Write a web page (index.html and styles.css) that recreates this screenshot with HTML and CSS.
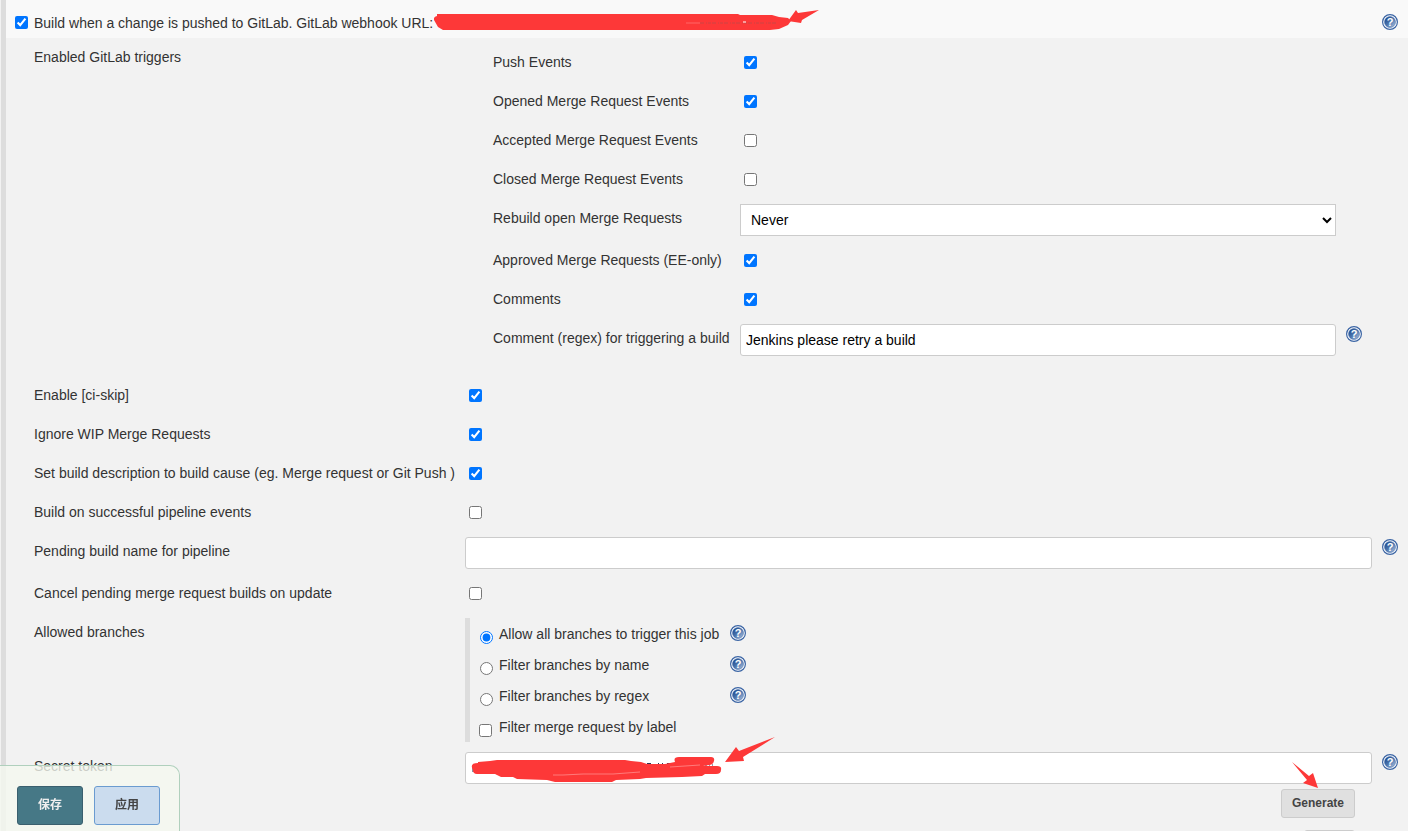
FILE: index.html
```html
<!DOCTYPE html>
<html lang="zh-CN">
<head>
<meta charset="utf-8">
<title>Build Triggers</title>
<link rel="stylesheet" href="styles.css">
</head>
<body>
<svg class="defs" width="0" height="0" aria-hidden="true">
  <defs>
    <linearGradient id="ball" x1="0" y1="0" x2="1" y2="1">
      <stop offset="0.1" stop-color="#1d4a8c"/>
      <stop offset="0.5" stop-color="#4d76ae"/>
      <stop offset="1" stop-color="#b8cae4"/>
    </linearGradient>
    <symbol id="help" viewBox="0 0 16 16">
      <circle cx="8" cy="8" r="7.4" fill="#fff" stroke="#3a64a4" stroke-width="1.2"/>
      <circle cx="8" cy="8" r="5.5" fill="url(#ball)" stroke="#3a64a4" stroke-width="0.5"/>
      <text x="8" y="12" text-anchor="middle" class="help-mark">?</text>
    </symbol>
  </defs>
</svg>
<form class="config">
  <header class="trigger">
    <input type="checkbox" id="gitlab" checked>
    <label for="gitlab">Build when a change is pushed to GitLab. GitLab webhook URL:</label>
    <span class="redacted">
      <svg class="scribble-url" width="390" height="32" viewBox="0 0 390 32" aria-hidden="true">
        <path d="M3 14h301l2 1h32l7 2 9 1 3 3-3 4-9 4-9 1H9l-5-3-4-7q-1-3 3-4z" fill="#fd3838"/>
        <path d="M252 23h14" stroke="#f66" stroke-width="1"/>
        <path d="M266 23h78" stroke="#c44" stroke-width="1" stroke-dasharray="4 2 1 1 3 1"/>
        <path d="M309 22h3" stroke="#fff"/>
        <path d="M354 21l8-11 2 3 21-3-17 10-1 3z" fill="#fd3838"/>
      </svg>
    </span>
    <a class="help" href="#" aria-label="Help"><svg width="16" height="16"><use href="#help"/></svg></a>
  </header>

  <section class="settings">
    <div class="row group" role="group" aria-labelledby="triggers">
      <span class="name" id="triggers">Enabled GitLab triggers</span>
      <div class="events">
        <div class="event"><label for="push">Push Events</label><input type="checkbox" id="push" checked></div>
        <div class="event"><label for="opened">Opened Merge Request Events</label><input type="checkbox" id="opened" checked></div>
        <div class="event"><label for="accepted">Accepted Merge Request Events</label><input type="checkbox" id="accepted"></div>
        <div class="event"><label for="closed">Closed Merge Request Events</label><input type="checkbox" id="closed"></div>
        <div class="event"><label for="rebuild">Rebuild open Merge Requests</label>
          <select id="rebuild" class="field"><option>Never</option></select></div>
        <div class="event"><label for="approved">Approved Merge Requests (EE-only)</label><input type="checkbox" id="approved" checked></div>
        <div class="event"><label for="comments">Comments</label><input type="checkbox" id="comments" checked></div>
        <div class="event"><label for="regex">Comment (regex) for triggering a build</label>
          <input type="text" id="regex" class="field" value="Jenkins please retry a build">
          <a class="help" href="#" aria-label="Help"><svg width="16" height="16"><use href="#help"/></svg></a></div>
      </div>
    </div>

    <div class="row"><label for="ciskip">Enable [ci-skip]</label><input type="checkbox" id="ciskip" checked></div>
    <div class="row"><label for="wip">Ignore WIP Merge Requests</label><input type="checkbox" id="wip" checked></div>
    <div class="row"><label for="cause">Set build description to build cause (eg. Merge request or Git Push )</label><input type="checkbox" id="cause" checked></div>
    <div class="row"><label for="pipeline">Build on successful pipeline events</label><input type="checkbox" id="pipeline"></div>
    <div class="row"><label for="pending">Pending build name for pipeline</label>
      <input type="text" id="pending" class="field">
      <a class="help" href="#" aria-label="Help"><svg width="16" height="16"><use href="#help"/></svg></a></div>
    <div class="row"><label for="cancel">Cancel pending merge request builds on update</label><input type="checkbox" id="cancel"></div>

    <div class="row" role="group" aria-labelledby="allowed"><span class="name" id="allowed">Allowed branches</span>
      <div class="branches">
        <div class="branch"><input type="radio" name="branch" id="all" checked><label for="all">Allow all branches to trigger this job</label>
          <a class="help" href="#" aria-label="Help"><svg width="16" height="16"><use href="#help"/></svg></a></div>
        <div class="branch"><input type="radio" name="branch" id="byname"><label for="byname">Filter branches by name</label>
          <a class="help" href="#" aria-label="Help"><svg width="16" height="16"><use href="#help"/></svg></a></div>
        <div class="branch"><input type="radio" name="branch" id="byregex"><label for="byregex">Filter branches by regex</label>
          <a class="help" href="#" aria-label="Help"><svg width="16" height="16"><use href="#help"/></svg></a></div>
        <div class="branch"><input type="checkbox" id="bylabel"><label for="bylabel">Filter merge request by label</label></div>
      </div>
    </div>

    <div class="row"><label for="token">Secret token</label>
      <div class="token">
        <input type="text" id="token" class="field">
        <svg class="scribble-token" width="310" height="50" viewBox="0 0 310 50" aria-hidden="true">
          <path d="M182 27.500h4m7 0h1m3 0h1m4 0h3m35 1.500h2m2 0h1m2 0h1" stroke="#335" stroke-width="1"/>
          <path d="M8 36v-4" stroke="#224" stroke-width="1"/>
          <path d="M13 26l12-1 7-1h128l6 1 10 1 6 2h18l10-2q-2-5 4-5h32q4 0 3 4-1 4-5 4l-6 1h14q5 0 4 4 0 4-5 4h-11l-3 2-20 1-36 1-6 1-24 1-4 2H90l-8-2-30-1-4-2H36l-6-3H12q-4 0-4-4-4-7 5-7z" fill="#fd3838"/>
          <path d="M88 39h10l20-1h30l27-2M205 31l30-2" fill="none" stroke="#ff8c8c" stroke-width="0.800"/>
          <path d="M260 26l11-15 3 4 36-14-32 20 1 4z" fill="#fd3838"/>
        </svg>
      </div>
      <a class="help" href="#" aria-label="Help"><svg width="16" height="16"><use href="#help"/></svg></a></div>

    <div class="actions">
      <button type="button" class="plain">Generate</button>
      <svg class="pointer" width="28" height="28" viewBox="0 0 28 28" aria-hidden="true"><path d="M1 1l17 14 4-3 5 15-15-5 4-3z" fill="#fd3838"/></svg>
      <button type="button" class="plain" aria-label="Clear"></button>
    </div>
  </section>

  <footer class="savebar">
    <button type="submit" class="save">保存</button>
    <button type="button" class="apply">应用</button>
  </footer>
</form>
</body>
</html>
```
FILE: styles.css
```css
* { box-sizing: border-box; }
body {
  margin: 0;
  height: 100vh;
  overflow: hidden;
  background: #f2f2f2;
  color: #333;
  font: 14px/28px "Liberation Sans", Arial, "Noto Sans CJK SC", sans-serif;
}
.defs { position: absolute; }
.help-mark { font: bold 11px "Liberation Sans", sans-serif; fill: #fff; }
input, select, button { font: inherit; }
input[type=checkbox], input[type=radio] { width: 13px; height: 13px; }

.config {
  margin-left: 1px;
  border-left: 5px solid #ddd;
}
.trigger {
  display: flex;
  align-items: center;
  gap: 6px;
  height: 38px;
  padding: 6px 10px 0 9px;
  background: #f9f9f9;
}
.trigger input { margin: 0; }
.trigger label { padding-top: 2px; }
.trigger .help { margin: 0 0 0 auto; }
.redacted { position: relative; align-self: stretch; }
.scribble-url { position: absolute; top: -6px; left: -5px; }

.settings { padding: 5px 10px 0 28px; }
.row, .event {
  display: grid;
  align-items: start;
  margin-bottom: 10px;
}
.row { grid-template-columns: 431px 1fr 26px; min-height: 29px; }
.group { margin-bottom: 15px; }
.events { padding: 5px 10px 0 28px; }
.event { grid-template-columns: 247px 1fr 26px; min-height: 29px; }
.row label, .row .name { white-space: nowrap; }
.row input[type=checkbox] { margin: 8px 4px; }
.event:last-child { margin-bottom: 0; padding-bottom: 10px; }

.field {
  width: 100%;
  height: 32px;
  padding: 0 5px;
  border: 1px solid #ccc;
  border-radius: 3px;
  background: #fff;
  color: #000;
}
select.field { padding: 0 6px; border-radius: 0; }

.help { display: block; height: 16px; margin: 2px 0 0 10px; }
.help svg { display: block; }

.branches {
  padding-left: 10px;
  border-left: 5px solid #ddd;
}
.branch {
  display: grid;
  grid-template-columns: 19px 221px 26px;
  align-items: start;
  height: 31px;
}
.branch label { padding-top: 2px; }
.branch .help { margin-top: 7px; }
.branch input[type=radio] { margin: 13px 0 0; }
.branch input[type=checkbox] { margin: 13px 0 0 -1px; }
.branch input[type=radio] { justify-self: start; }

.token { position: relative; }
.scribble-token { position: absolute; top: -16px; left: 0; pointer-events: none; }

.actions {
  position: relative;
  display: flex;
  flex-direction: column;
  align-items: flex-end;
  gap: 12px;
  margin-top: -5px;
  padding-right: 43px;
}
.pointer { position: absolute; top: -28px; right: 79px; }
.plain {
  min-width: 51px;
  height: 29px;
  padding: 0 10px 2px;
  border: 1px solid #ccc;
  border-radius: 3px;
  background: #e0e0e0;
  color: #444;
  font-size: 12px;
  line-height: 24px;
  font-weight: bold;
}

.savebar {
  position: fixed;
  left: 0;
  bottom: 0;
  display: flex;
  gap: 11px;
  padding: 20px 19px 6px 17px;
  border: 1px solid #b0d0bd;
  border-width: 1px 1px 0 0;
  border-radius: 0 10px 0 0;
  background: rgba(245, 249, 240, 0.78);
}
.savebar button {
  width: 66px;
  height: 39px;
  padding: 0 0 2px;
  border: 1px solid #3a5f6e;
  border-radius: 3px;
  font-size: 12px;
  font-weight: bold;
}
.savebar .save { background: #467886; color: #eee; }
.savebar .apply { border-color: #6a9bd0; background: #cbdcee; color: #444; }
```
